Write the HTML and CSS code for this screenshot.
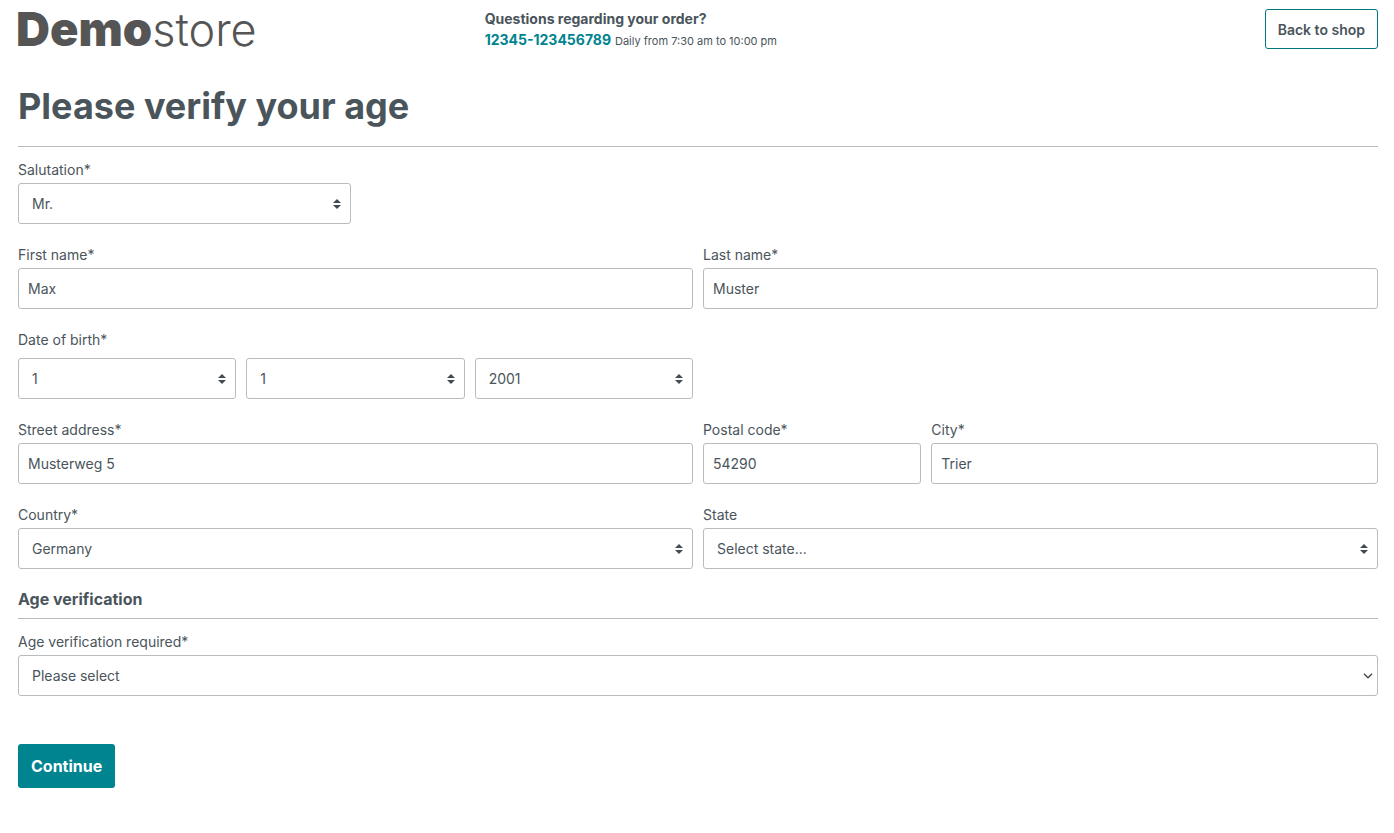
FILE: index.html
```html
<!DOCTYPE html>
<html lang="en">
<head>
<meta charset="utf-8">
<meta name="viewport" content="width=device-width, initial-scale=1">
<title>Please verify your age</title>
<link rel="stylesheet" href="styles.css">
</head>
<body>
<header class="header grid">
  <a class="logo" href="#"><span class="logo-strong">Demo</span><span class="logo-light">store</span></a>
  <div class="contact">
    <strong>Questions regarding your order?</strong>
    <div class="contact-line"><a class="phone" href="tel:12345123456789">12345-123456789</a> <span class="hours">Daily from 7:30 am to 10:00 pm</span></div>
  </div>
  <a class="back" href="#">Back to shop</a>
</header>
<main>
  <h1 class="title">Please verify your age</h1>
  <form class="form">
    <div class="grid rows">
      <div class="field span-3">
        <label for="salutation">Salutation*</label>
        <select class="control select" id="salutation"><option>Mr.</option></select>
      </div>
      <div class="field span-6 row-start">
        <label for="first">First name*</label>
        <input class="control" id="first" type="text" value="Max">
      </div>
      <div class="field span-6">
        <label for="last">Last name*</label>
        <input class="control" id="last" type="text" value="Muster">
      </div>
      <fieldset class="birth span-12">
        <legend>Date of birth*</legend>
        <div class="grid">
          <select class="control select span-2" aria-label="Day"><option>1</option></select>
          <select class="control select span-2" aria-label="Month"><option>1</option></select>
          <select class="control select span-2" aria-label="Year"><option>2001</option></select>
        </div>
      </fieldset>
      <div class="field span-6">
        <label for="street">Street address*</label>
        <input class="control" id="street" type="text" value="Musterweg 5">
      </div>
      <div class="field span-2">
        <label for="postal">Postal code*</label>
        <input class="control" id="postal" type="text" value="54290">
      </div>
      <div class="field span-4">
        <label for="city">City*</label>
        <input class="control" id="city" type="text" value="Trier">
      </div>
      <div class="field span-6">
        <label for="country">Country*</label>
        <select class="control select" id="country"><option>Germany</option></select>
      </div>
      <div class="field span-6">
        <label for="state">State</label>
        <select class="control select" id="state"><option>Select state...</option></select>
      </div>
    </div>
    <h2 class="subtitle">Age verification</h2>
    <div class="field">
      <label for="age">Age verification required*</label>
      <select class="control select select-chevron" id="age"><option>Please select</option></select>
    </div>
    <button class="continue" type="submit">Continue</button>
  </form>
</main>
</body>
</html>
```
FILE: styles.css
```css
* { box-sizing: border-box; }

body {
  margin: 0;
  padding: 9px 16px 45px 18px;
  background: #fff;
  color: #4a545b;
  font: 14px/20px Inter, "Liberation Sans", sans-serif;
}

.grid {
  display: grid;
  grid-template-columns: repeat(12, minmax(0, 1fr));
  column-gap: 10px;
}

.rows { row-gap: 21px; }
.span-2 { grid-column: span 2; }
.span-3 { grid-column: span 3; }
.span-4 { grid-column: span 4; }
.span-6 { grid-column: span 6; }
.span-12 { grid-column: span 12; }
.row-start { grid-column: 1 / span 6; }

.header { align-items: start; }

.logo {
  grid-column: span 4;
  margin-left: -2px;
  color: #555;
  font-size: 47px;
  line-height: 40px;
  text-decoration: none;
  white-space: nowrap;
}
.logo-strong { font-weight: 900; }
.logo-light {
  font-size: 45px;
  font-weight: 300;
}

.contact {
  grid-column: span 5;
  padding-left: 10px;
}
.contact-line { line-height: 22px; }
.phone {
  color: #00848f;
  font-weight: 700;
  text-decoration: none;
}
.hours { font-size: 11px; }

.back {
  grid-column: span 3;
  justify-self: end;
  padding: 10px 12px 8px;
  border: 1px solid #00757f;
  border-radius: 3px;
  color: #4a545b;
  font-weight: 600;
  text-decoration: none;
}

.title {
  margin: 30px 0 13px;
  padding-bottom: 16px;
  border-bottom: 1px solid #b8bcbe;
  font-size: 36px;
  line-height: 48px;
  font-weight: 700;
}

.field {
  display: flex;
  flex-direction: column;
  gap: 3px;
}

.birth {
  min-width: 0;
  margin: 0;
  padding: 0;
  border: 0;
}
.birth legend {
  padding: 0;
  margin-bottom: 8px;
}

.control {
  width: 100%;
  height: 41px;
  margin: 0;
  padding: 0 9px;
  border: 1px solid #b8bcbe;
  border-radius: 3px;
  background-color: #fff;
  color: inherit;
  font: inherit;
}

.select {
  appearance: none;
  padding: 0 28px 0 13px;
  background-image: url("data:image/svg+xml,%3Csvg xmlns='http://www.w3.org/2000/svg' viewBox='0 0 8 10'%3E%3Cpath fill='%23444b50' d='M4 0 8 4H0zM0 6h8L4 10z'/%3E%3C/svg%3E");
  background-repeat: no-repeat;
  background-position: right 9px center;
  background-size: 8px 10px;
}

.select-chevron {
  background-image: url("data:image/svg+xml,%3Csvg xmlns='http://www.w3.org/2000/svg' viewBox='0 0 10 6'%3E%3Cpath fill='none' stroke='%23444b50' stroke-width='1.5' d='M1 .8 5 4.8 9 .8'/%3E%3C/svg%3E");
  background-position: right 4px center;
  background-size: 10px 6px;
}

.subtitle {
  margin: 20px 0 13px;
  padding-bottom: 8px;
  border-bottom: 1px solid #b8bcbe;
  font-size: 16px;
  line-height: 21px;
  font-weight: 700;
}

.continue {
  display: block;
  margin-top: 48px;
  padding: 12px 13px;
  border: 0;
  border-radius: 3px;
  background: #00848f;
  color: #fff;
  font: 700 16px/20px Inter, "Liberation Sans", sans-serif;
}
```
